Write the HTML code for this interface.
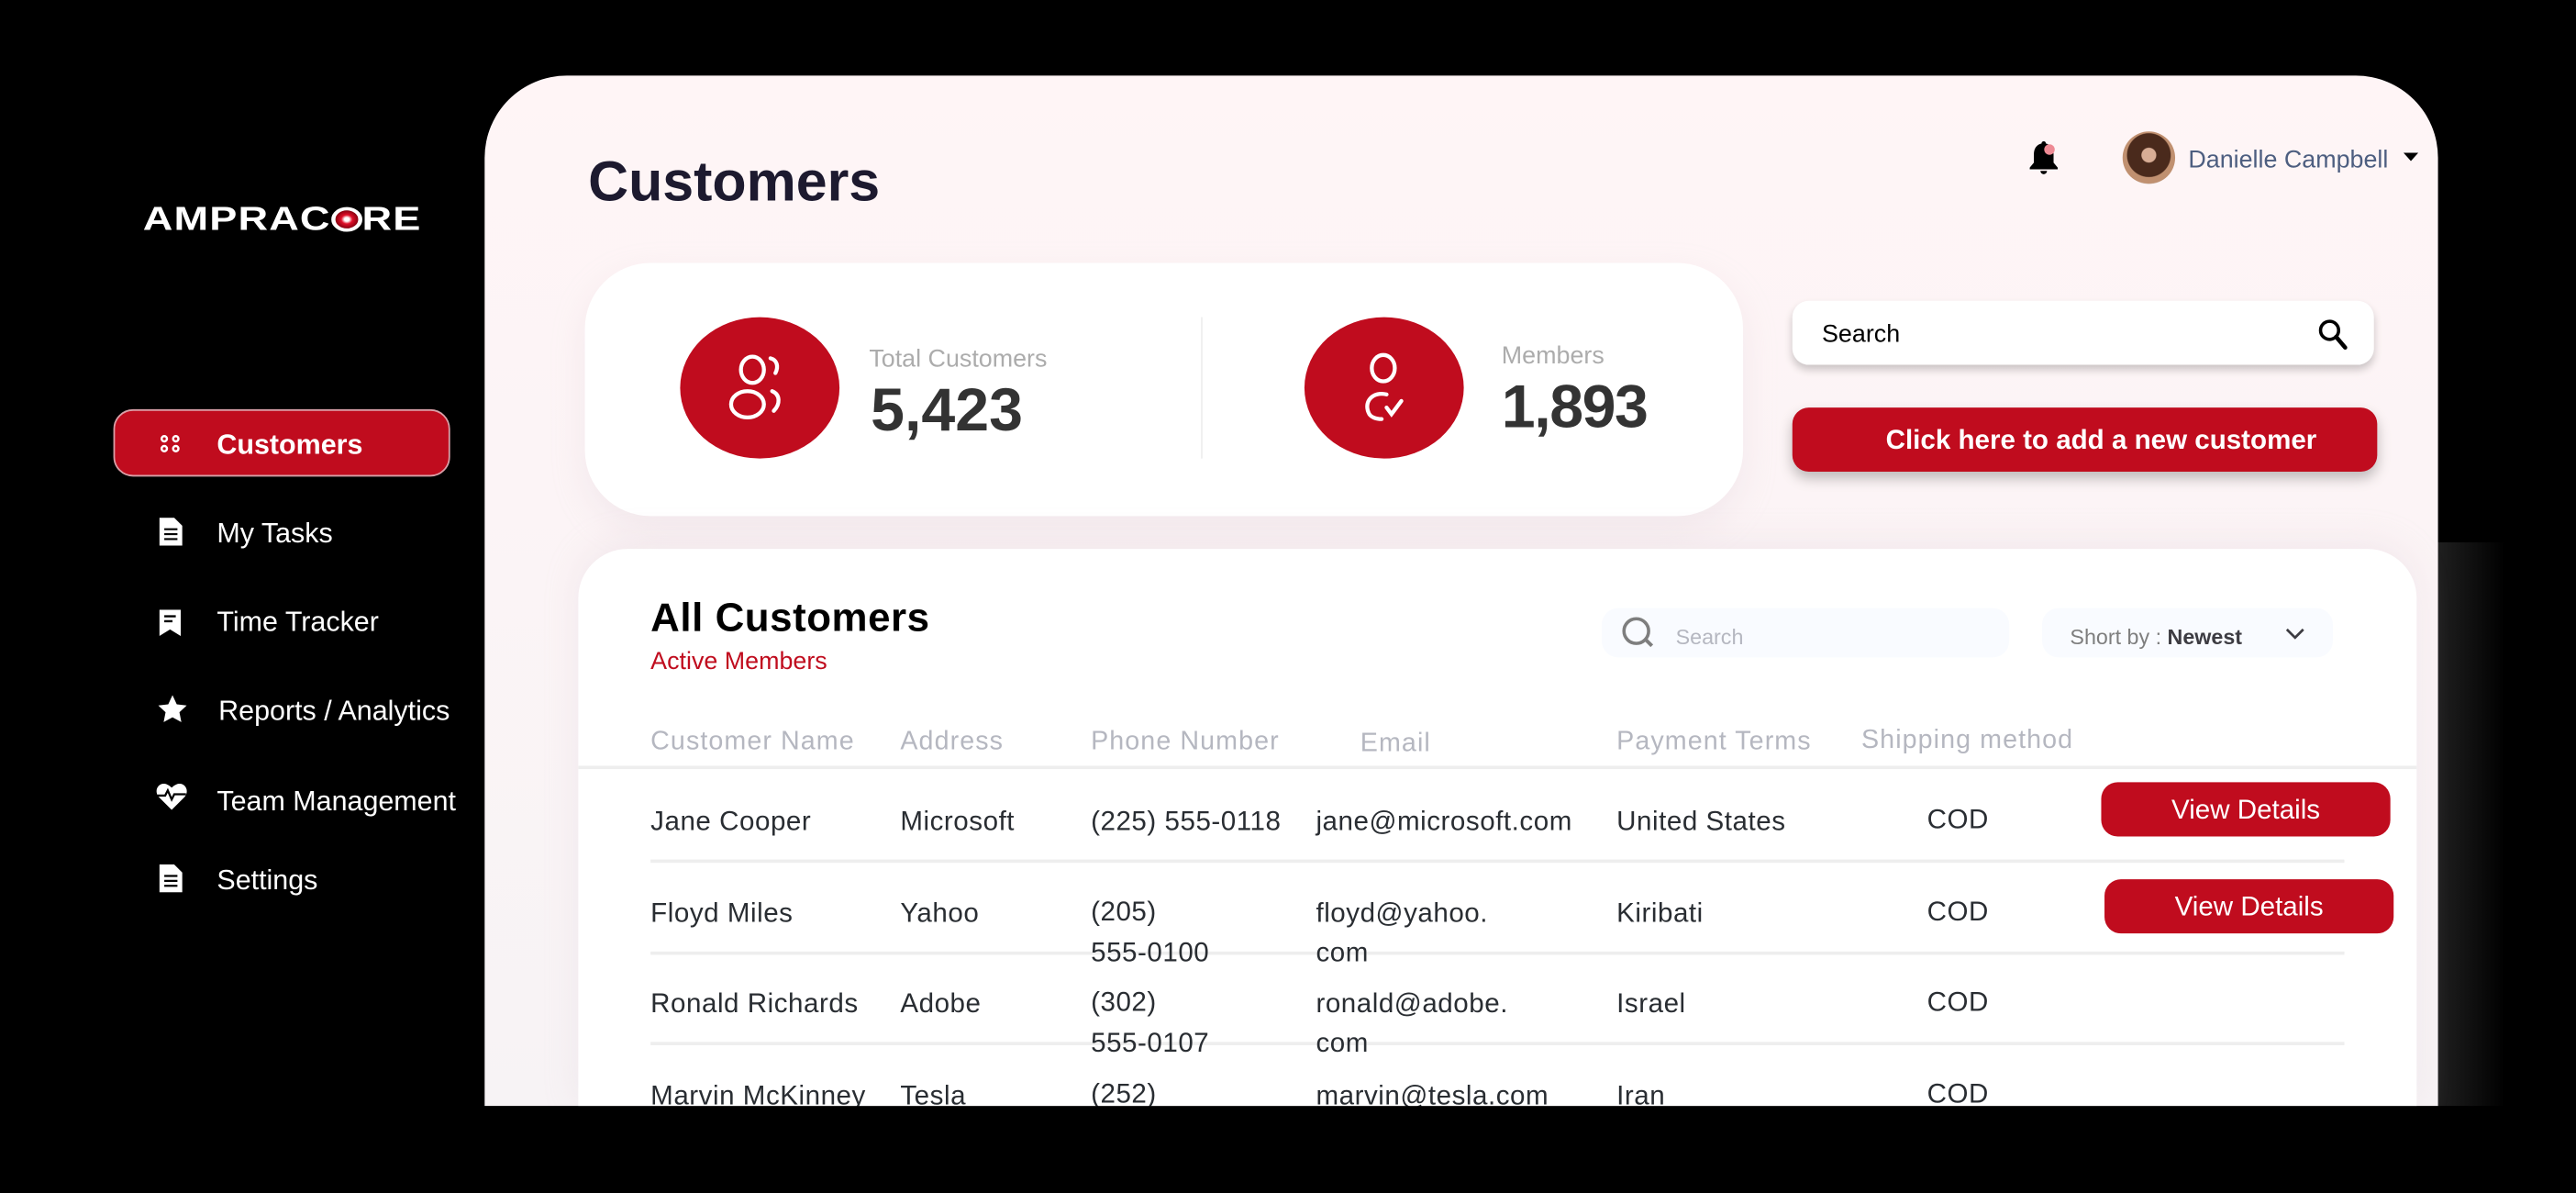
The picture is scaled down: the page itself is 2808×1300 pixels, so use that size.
<!DOCTYPE html>
<html><head><meta charset="utf-8"><style>
*{margin:0;padding:0;box-sizing:border-box}
html,body{width:2808px;height:1300px;overflow:hidden;background:#000}
#s{position:absolute;left:0;top:0;width:1568px;height:726px;transform:scale(1.79082);transform-origin:0 0;font-family:"Liberation Sans",sans-serif;background:#000}
.a{position:absolute;white-space:nowrap}
.nav{color:#fff;font-size:17px}
.hd{color:#b5b7c0;font-size:16px;letter-spacing:0.6px}
.td{color:#292d32;font-size:16.5px;letter-spacing:0.3px}
.line{position:absolute;height:2px;background:#eeeeee}
.btn{position:absolute;background:#c00c1e;border-radius:10px;color:#fff;font-size:16.5px;text-align:center}
</style></head><body><div id="s">
<div class="a" style="left:1470px;top:330px;width:55px;height:343px;background:linear-gradient(90deg,#2a2a2a,#000)"></div>
<div class="a" style="left:295px;top:46px;width:1189px;height:627px;border-radius:50px 50px 0 0;background:linear-gradient(180deg,#fff5f6,#f7f3f5);overflow:hidden"></div>
<div class="a" style="left:87px;top:123px;color:#fff;font-size:20px;font-weight:bold;letter-spacing:0.5px;transform:scaleX(1.26);transform-origin:0 0">AMPRAC<span style="display:inline-block;width:15px;height:15px;border-radius:50%;border:2px solid #fff;background:radial-gradient(circle,#fff 15%,#e0102a 35%,#8a0010 70%);vertical-align:-1px"></span>RE</div>
<div class="a" style="left:69px;top:249px;width:205px;height:41px;background:#c00c1e;border-radius:12px;border:1px solid #d9a0a8"></div>
<svg class="a" style="left:97px;top:264px" width="13" height="12" viewBox="0 0 13 12"><g fill="none" stroke="#fff" stroke-width="1.4"><circle cx="3" cy="3" r="1.6"/><circle cx="10" cy="3" r="1.6"/><circle cx="3" cy="9" r="1.6"/><circle cx="10" cy="9" r="1.6"/></g></svg>
<div class="a nav" style="left:132px;top:261px;font-weight:bold">Customers</div>
<svg class="a" style="left:97px;top:315px" width="14" height="17" viewBox="0 0 14 17"><path d="M0 0h9l5 5v12H0z" fill="#fff"/><path d="M3 7h8M3 10h8M3 13h8" stroke="#000" stroke-width="1.2"/></svg>
<div class="a nav" style="left:132px;top:315px">My Tasks</div>
<svg class="a" style="left:97px;top:371px" width="13" height="16" viewBox="0 0 13 16"><path d="M0 0h13v16l-6.5-4L0 16z" fill="#fff"/><path d="M3 4h7M3 7h5" stroke="#000" stroke-width="1.3"/></svg>
<div class="a nav" style="left:132px;top:369px">Time Tracker</div>
<svg class="a" style="left:96px;top:423px" width="18" height="17" viewBox="0 0 24 23"><path d="M12 0l3.5 7.5 8.2 1-6 5.6 1.6 8.1L12 18.2 4.7 22.2l1.6-8.1-6-5.6 8.2-1z" fill="#fff"/></svg>
<div class="a nav" style="left:133px;top:423px">Reports / Analytics</div>
<svg class="a" style="left:95px;top:476px" width="19" height="17" viewBox="0 0 24 21"><path d="M12 21L2 11C-2 6 2 0 7 1c2 .4 4 2 5 3 1-1 3-2.6 5-3 5-1 9 5 5 10z" fill="#fff"/><path d="M1 10h6l2-4 3 7 2-4h9" stroke="#000" stroke-width="1.6" fill="none"/></svg>
<div class="a nav" style="left:132px;top:478px">Team Management</div>
<svg class="a" style="left:97px;top:526px" width="14" height="17" viewBox="0 0 14 17"><path d="M0 0h9l5 5v12H0z" fill="#fff"/><path d="M3 7h8M3 10h8M3 13h8" stroke="#000" stroke-width="1.2"/></svg>
<div class="a nav" style="left:132px;top:526px">Settings</div>
<div class="a" style="left:358px;top:92px;font-size:34px;font-weight:bold;color:#1d1a2f">Customers</div>
<svg class="a" style="left:1234px;top:85px" width="20" height="22" viewBox="0 0 20 22"><path d="M10 1c-1 0-1.3.7-1.3 1.3C5.5 3 4 5.5 4 9v5l-2.5 3v1h17v-1L16 14V9c0-3.5-1.5-6-4.7-6.7C11.3 1.7 11 1 10 1z" fill="#000"/><path d="M8 19a2 2 0 0 0 4 0z" fill="#000"/><circle cx="13.5" cy="6" r="3.2" fill="#ee8a94"/></svg>
<div class="a" style="left:1292px;top:80px;width:32px;height:32px;border-radius:50%;background:radial-gradient(circle at 50% 45%,#d8ad95 0 18%,#4a2a1c 20% 55%,#c09070 57% 72%,#ddd 74%)"></div>
<div class="a" style="left:1332px;top:89px;font-size:15px;color:#4d5e80">Danielle Campbell</div>
<svg class="a" style="left:1463px;top:93px" width="9" height="5"><path d="M0 0h9L4.5 5z" fill="#000"/></svg>
<div class="a" style="left:356px;top:160px;width:705px;height:154px;background:#fff;border-radius:40px;box-shadow:0 8px 20px rgba(220,200,210,.25)"></div>
<div class="a" style="left:414px;top:193px;width:97px;height:86px;border-radius:50%;background:#c00c1e"></div>
<svg class="a" style="left:441px;top:213px" width="44" height="45" viewBox="0 0 44 45"><g fill="none" stroke="#fff" stroke-width="2.4" stroke-linecap="round"><ellipse cx="17" cy="12" rx="7" ry="8"/><path d="M28 5c4 1 5 5 3 9"/><ellipse cx="14" cy="33" rx="10" ry="8"/><path d="M29 25c5 2 5 8 1 12"/></g></svg>
<div class="a" style="left:529px;top:210px;font-size:15px;color:#acacac">Total Customers</div>
<div class="a" style="left:530px;top:229px;font-size:37px;font-weight:bold;color:#333">5,423</div>
<div class="a" style="left:731px;top:193px;width:1px;height:86px;background:#eee"></div>
<div class="a" style="left:794px;top:193px;width:97px;height:86px;border-radius:50%;background:#c00c1e"></div>
<svg class="a" style="left:826px;top:214px" width="34" height="44" viewBox="0 0 34 44"><g fill="none" stroke="#fff" stroke-width="2.4" stroke-linecap="round"><ellipse cx="16" cy="10" rx="7" ry="8"/><path d="M18 26c-8-2-14 4-11 11 1 3 5 4 8 4"/><path d="M18 34l3 4 6-8"/></g></svg>
<div class="a" style="left:914px;top:208px;font-size:15px;color:#acacac">Members</div>
<div class="a" style="left:914px;top:227px;font-size:37px;font-weight:bold;color:#333;letter-spacing:-0.8px">1,893</div>
<div class="a" style="left:1091px;top:183px;width:354px;height:39px;background:#fff;border-radius:10px;box-shadow:0 3px 5px rgba(0,0,0,.2)"></div>
<div class="a" style="left:1109px;top:195px;font-size:15px;color:#000">Search</div>
<svg class="a" style="left:1411px;top:194px" width="18" height="19" viewBox="0 0 18 19"><circle cx="7" cy="7" r="5.5" fill="none" stroke="#000" stroke-width="2"/><path d="M11 11l5.5 6.5" stroke="#000" stroke-width="2.5" stroke-linecap="round"/></svg>
<div class="btn" style="left:1091px;top:248px;width:356px;height:39px;line-height:40px;font-weight:bold;box-shadow:0 4px 8px rgba(0,0,0,.25);padding-left:20px">Click here to add a new customer</div>
<div class="a" style="left:352px;top:334px;width:1119px;height:339px;background:#fff;border-radius:30px 30px 0 0;box-shadow:0 -4px 20px rgba(220,200,210,.25)"></div>
<div class="a" style="left:396px;top:363px;font-size:24.5px;font-weight:bold;color:#000;letter-spacing:0.3px">All Customers</div>
<div class="a" style="left:396px;top:394px;font-size:15px;color:#c00c1e">Active Members</div>
<div class="a" style="left:975px;top:370px;width:248px;height:30px;background:#f9fbff;border-radius:10px"></div>
<svg class="a" style="left:985px;top:375px" width="25" height="20" viewBox="0 0 25 20"><circle cx="11" cy="9" r="7.5" fill="none" stroke="#7e7e7e" stroke-width="2"/><path d="M16.5 14l4 4" stroke="#7e7e7e" stroke-width="2.2"/></svg>
<div class="a" style="left:1020px;top:380px;font-size:13px;color:#b5b7c0">Search</div>
<div class="a" style="left:1243px;top:370px;width:177px;height:30px;background:#f9fbff;border-radius:10px"></div>
<div class="a" style="left:1260px;top:380px;font-size:13px;color:#7e7e7e">Short by : <b style="color:#3d3c42">Newest</b></div>
<svg class="a" style="left:1391px;top:382px" width="12" height="7"><path d="M1 1l5 5 5-5" fill="none" stroke="#3d3c42" stroke-width="1.5"/></svg>
<div class="a hd" style="left:396px;top:443px">Customer Name</div>
<div class="a hd" style="left:548px;top:443px">Address</div>
<div class="a hd" style="left:664px;top:443px">Phone Number</div>
<div class="a hd" style="left:828px;top:444px">Email</div>
<div class="a hd" style="left:984px;top:443px">Payment Terms</div>
<div class="a hd" style="left:1133px;top:442px">Shipping method</div>
<div class="line" style="left:352px;top:466px;width:1119px"></div>
<div class="line" style="left:396px;top:523px;width:1031px"></div>
<div class="line" style="left:396px;top:579px;width:1031px"></div>
<div class="line" style="left:396px;top:634px;width:1031px"></div>
<div class="a td" style="left:396px;top:491px">Jane Cooper</div>
<div class="a td" style="left:548px;top:491px">Microsoft</div>
<div class="a td" style="left:664px;top:491px">(225) 555-0118</div>
<div class="a td" style="left:801px;top:491px">jane@microsoft.com</div>
<div class="a td" style="left:984px;top:491px">United States</div>
<div class="a td" style="left:1173px;top:490px">COD</div>
<div class="btn" style="left:1279px;top:476px;width:176px;height:33px;line-height:35px">View Details</div>
<div class="a td" style="left:396px;top:547px">Floyd Miles</div>
<div class="a td" style="left:548px;top:547px">Yahoo</div>
<div class="a td" style="left:664px;top:546px">(205)</div>
<div class="a td" style="left:664px;top:571px">555-0100</div>
<div class="a td" style="left:801px;top:547px">floyd@yahoo.</div>
<div class="a td" style="left:801px;top:571px">com</div>
<div class="a td" style="left:984px;top:547px">Kiribati</div>
<div class="a td" style="left:1173px;top:546px">COD</div>
<div class="btn" style="left:1281px;top:535px;width:176px;height:33px;line-height:35px">View Details</div>
<div class="a td" style="left:396px;top:602px">Ronald Richards</div>
<div class="a td" style="left:548px;top:602px">Adobe</div>
<div class="a td" style="left:664px;top:601px">(302)</div>
<div class="a td" style="left:664px;top:626px">555-0107</div>
<div class="a td" style="left:801px;top:602px">ronald@adobe.</div>
<div class="a td" style="left:801px;top:626px">com</div>
<div class="a td" style="left:984px;top:602px">Israel</div>
<div class="a td" style="left:1173px;top:601px">COD</div>
<div class="a td" style="left:396px;top:658px">Marvin McKinney</div>
<div class="a td" style="left:548px;top:658px">Tesla</div>
<div class="a td" style="left:664px;top:657px">(252)</div>
<div class="a td" style="left:801px;top:658px">marvin@tesla.com</div>
<div class="a td" style="left:984px;top:658px">Iran</div>
<div class="a td" style="left:1173px;top:657px">COD</div>
<div class="a" style="left:0;top:673px;width:1568px;height:53px;background:#000"></div>
</div></body></html>
